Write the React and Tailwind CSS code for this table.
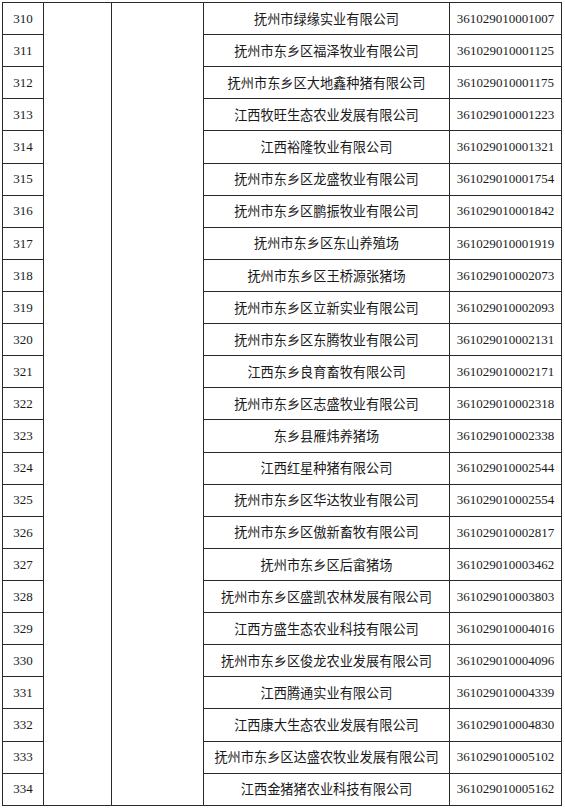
import { Fragment } from "react"

const rows = [
  ["310", "抚州市绿缘实业有限公司", "361029010001007"],
  ["311", "抚州市东乡区福泽牧业有限公司", "361029010001125"],
  ["312", "抚州市东乡区大地鑫种猪有限公司", "361029010001175"],
  ["313", "江西牧旺生态农业发展有限公司", "361029010001223"],
  ["314", "江西裕隆牧业有限公司", "361029010001321"],
  ["315", "抚州市东乡区龙盛牧业有限公司", "361029010001754"],
  ["316", "抚州市东乡区鹏振牧业有限公司", "361029010001842"],
  ["317", "抚州市东乡区东山养殖场", "361029010001919"],
  ["318", "抚州市东乡区王桥源张猪场", "361029010002073"],
  ["319", "抚州市东乡区立新实业有限公司", "361029010002093"],
  ["320", "抚州市东乡区东腾牧业有限公司", "361029010002131"],
  ["321", "江西东乡良育畜牧有限公司", "361029010002171"],
  ["322", "抚州市东乡区志盛牧业有限公司", "361029010002318"],
  ["323", "东乡县雁炜养猪场", "361029010002338"],
  ["324", "江西红星种猪有限公司", "361029010002544"],
  ["325", "抚州市东乡区华达牧业有限公司", "361029010002554"],
  ["326", "抚州市东乡区傲新畜牧有限公司", "361029010002817"],
  ["327", "抚州市东乡区后畲猪场", "361029010003462"],
  ["328", "抚州市东乡区盛凯农林发展有限公司", "361029010003803"],
  ["329", "江西方盛生态农业科技有限公司", "361029010004016"],
  ["330", "抚州市东乡区俊龙农业发展有限公司", "361029010004096"],
  ["331", "江西腾通实业有限公司", "361029010004339"],
  ["332", "江西康大生态农业发展有限公司", "361029010004830"],
  ["333", "抚州市东乡区达盛农牧业发展有限公司", "361029010005102"],
  ["334", "江西金猪猪农业科技有限公司", "361029010005162"],
]

const cell = "border-r border-b border-[#2a2a2a] flex items-center justify-center"

export default function App() {
  return (
    <div className="w-[565px] h-[809px] bg-white pt-[2px] pl-[2px] text-[#1a1a1a]">
      <div className="w-[560px] grid grid-cols-[41px_68px_92px_246px_112px] auto-rows-[32.12px] border-l border-t border-[#2a2a2a]">
        {rows.map((r, i) => (
          <Fragment key={r[0]}>
            <div className={cell + " text-[13px] font-['Liberation_Serif',serif]"}>
              {r[0]}
            </div>
            {i === 0 && <div className={cell + " row-span-25"}></div>}
            {i === 0 && <div className={cell + " row-span-25"}></div>}
            <div className={cell + " text-[13.2px] font-['Noto_Sans_CJK_SC',sans-serif]"}>
              {r[1]}
            </div>
            <div className={cell + " text-[13px] font-['Liberation_Serif',serif]"}>
              {r[2]}
            </div>
          </Fragment>
        ))}
      </div>
    </div>
  )
}
